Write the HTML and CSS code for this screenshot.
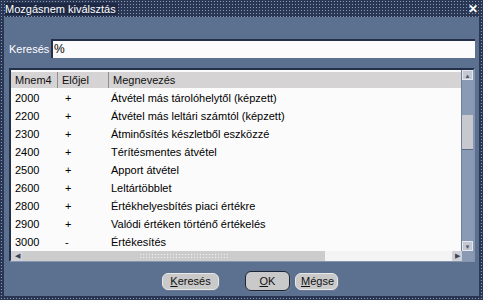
FILE: index.html
```html
<!DOCTYPE html>
<html lang="hu">

<head>
    <meta charset="utf-8">
    <title>Mozgásnem kiválsztás</title>
    <link rel="stylesheet" href="styles.css">
</head>

<body>
    <div class="window">
        <div class="titlebar">
            <span class="title">Mozgásnem kiválsztás</span>
            <span class="close">✕</span>
        </div>
        <div class="frame">
            <div class="panel">
                <div class="search">
                    <label>Keresés</label>
                    <div class="input">%</div>
                </div>

                <div class="list">
                    <div class="list-main">
                        <div class="table">
                            <div class="row head">
                                <span class="c1">Mnem4</span>
                                <span class="c2">Előjel</span>
                                <span class="c3">Megnevezés</span>
                            </div>
                            <div class="row"><span class="c1">2000</span><span class="c2">+</span><span class="c3">Átvétel más tárolóhelytől (képzett)</span></div>
                            <div class="row"><span class="c1">2200</span><span class="c2">+</span><span class="c3">Átvétel más leltári számtól (képzett)</span></div>
                            <div class="row"><span class="c1">2300</span><span class="c2">+</span><span class="c3">Átminősítés készletből eszközzé</span></div>
                            <div class="row"><span class="c1">2400</span><span class="c2">+</span><span class="c3">Térítésmentes átvétel</span></div>
                            <div class="row"><span class="c1">2500</span><span class="c2">+</span><span class="c3">Apport átvétel</span></div>
                            <div class="row"><span class="c1">2600</span><span class="c2">+</span><span class="c3">Leltártöbblet</span></div>
                            <div class="row"><span class="c1">2800</span><span class="c2">+</span><span class="c3">Értékhelyesbítés piaci értékre</span></div>
                            <div class="row"><span class="c1">2900</span><span class="c2">+</span><span class="c3">Valódi értéken történő értékelés</span></div>
                            <div class="row"><span class="c1">3000</span><span class="c2">-</span><span class="c3">Értékesítés</span></div>
                        </div>
                        <div class="vscroll">
                            <div class="arrow up">▲</div>
                            <div class="vtrack">
                                <div class="vthumb"></div>
                            </div>
                            <div class="arrow down">▼</div>
                        </div>
                    </div>
                    <div class="hscroll">
                        <div class="harrow">◀</div>
                        <div class="htrack">
                            <div class="hthumb"><div class="grip"></div></div>
                        </div>
                        <div class="harrow right">▶</div>
                        <div class="corner"></div>
                    </div>
                </div>

                <div class="buttons">
                    <button class="btn search-btn"><u>K</u>eresés</button>
                    <button class="btn default"><u>O</u>K</button>
                    <button class="btn"><u>M</u>égse</button>
                </div>
            </div>
        </div>
    </div>
</body>

</html>
```

FILE: styles.css
```css
body {
    margin: 0;
    font-family: "Liberation Sans", Arial, sans-serif;
    font-size: 11px;
}

.window {
    width: 483px;
    height: 300px;
    display: flex;
    flex-direction: column;
    background-color: #2a3754;
    background-image: radial-gradient(circle, #8b9ab3 0.6px, transparent 0.9px);
    background-size: 3px 3px;
}

.titlebar {
    height: 17px;
    display: flex;
    align-items: center;
    justify-content: space-between;
    padding: 0 5px;
    color: #fff;
    font-size: 11px;
}

.title {
    background: #1e2a45;
    padding-right: 2px;
}

.close {
    font-size: 12px;
    font-weight: bold;
}

.frame {
    flex: 1;
    padding: 0 4px 4px 4px;
    display: flex;
}

.panel {
    flex: 1;
    background: #5c7090;
    display: flex;
    flex-direction: column;
    padding: 22px 4px 0 5px;
}

.search {
    display: flex;
    align-items: center;
    height: 19px;
}

.search label {
    color: #fff;
    width: 42px;
}

.input {
    flex: 1;
    height: 19px;
    box-sizing: border-box;
    background: #fbfbfb;
    border-top: 2px solid #24304a;
    border-left: 2px solid #24304a;
    padding: 1px 0 0 1px;
    color: #000;
    font-size: 12px;
}

.list {
    margin-top: 10px;
    height: 190px;
    border: 2px solid #24304a;
    border-right-color: #8596b2;
    border-bottom-color: #8596b2;
    display: flex;
    flex-direction: column;
}

.list-main {
    flex: 1;
    display: flex;
}

.table {
    flex: 1;
    background: #fbfbfb;
    padding-top: 2px;
}

.row {
    display: flex;
    height: 18px;
    align-items: center;
    color: #000;
}

.row.head {
    height: 16px;
    background: #d5d3d3;
    margin-bottom: 1px;
    color: #111;
}

.c1 {
    width: 42px;
    padding-left: 4px;
}

.c2 {
    width: 46px;
    padding-left: 4px;
}

.row:not(.head) .c2 {
    padding-left: 8px;
    width: 42px;
}

.c3 {
    padding-left: 4px;
}

.head .c2,
.head .c3 {
    border-left: 1px solid #8f8f8f;
    height: 16px;
    line-height: 16px;
}

.vscroll {
    width: 11px;
    background: #8b9ab4;
    display: flex;
    flex-direction: column;
    border-left: 1px solid #6e7f9c;
}

.arrow {
    height: 10px;
    font-size: 6px;
    line-height: 10px;
    text-align: center;
    color: #4b556a;
    background: #c3c8d2;
    border: 1px solid #e5e8ee;
    box-sizing: border-box;
}

.vtrack {
    flex: 1;
    padding-top: 35px;
}

.vthumb {
    height: 34px;
    background: #c7c9ce;
    border-bottom: 1px solid #5b6a86;
}

.hscroll {
    height: 10px;
    display: flex;
    background: #8b9ab4;
}

.harrow {
    width: 12px;
    font-size: 7px;
    line-height: 10px;
    text-align: center;
    color: #3c4557;
    background: #cfd1d6;
}

.harrow.right {
    width: 10px;
}

.htrack {
    flex: 1;
    background: #f4f4f4;
}

.hthumb {
    width: 302px;
    height: 10px;
    background: #cdcccc;
    display: flex;
    justify-content: center;
    align-items: center;
}

.grip {
    width: 90px;
    height: 6px;
    margin-left: 20px;
    background-image: radial-gradient(circle, #f2f2f2 0.6px, transparent 0.9px);
    background-size: 3px 3px;
}

.corner {
    width: 11px;
    background: #8b9ab4;
}

.buttons {
    display: flex;
    justify-content: center;
    align-items: center;
    margin-top: 9px;
    padding-left: 16px;
}

.btn {
    font-family: "Liberation Sans", Arial, sans-serif;
    font-size: 11px;
    height: 17px;
    padding: 0 5px;
    border: 1px solid #e8e8e8;
    border-radius: 6px;
    background: #c9c9c9;
    color: #111;
    box-shadow: 1px 1px 0 #6b7a93;
}

.search-btn {
    width: 57px;
    margin-right: 26px;
}

.default {
    width: 45px;
    height: 20px;
    border: 1px solid #1c2538;
    margin-right: 5px;
}

.btn:last-child {
    width: 43px;
}
```
